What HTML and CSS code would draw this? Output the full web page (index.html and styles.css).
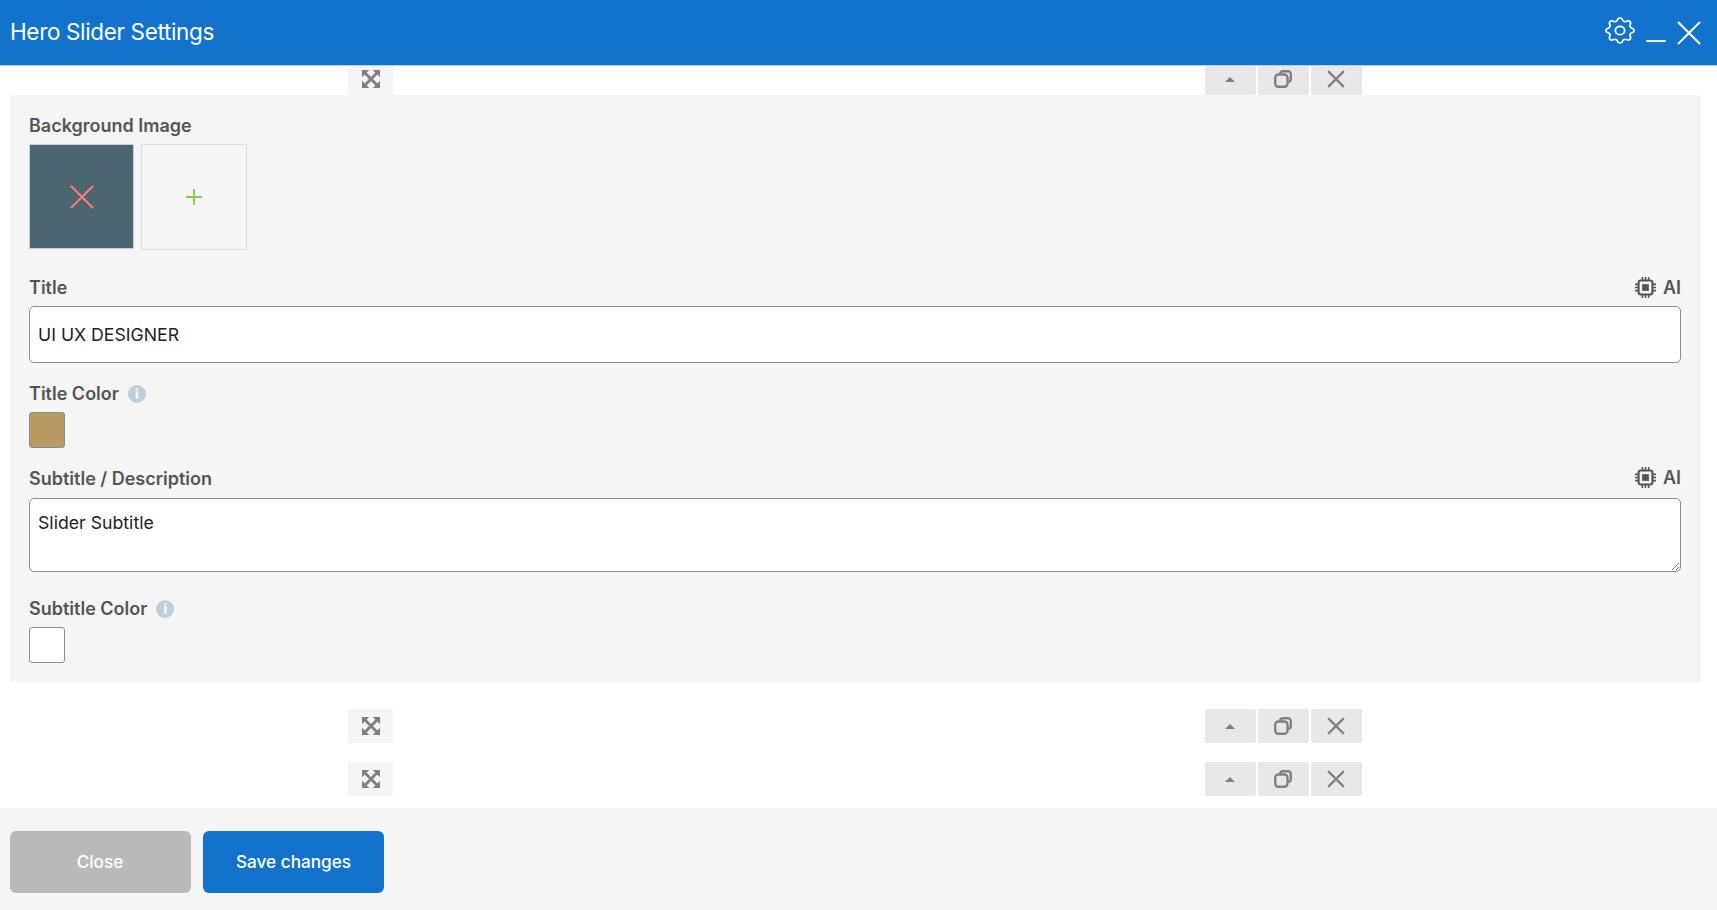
FILE: index.html
```html
<!DOCTYPE html>
<html lang="en">
<head>
<meta charset="utf-8">
<title>Hero Slider Settings</title>
<link rel="stylesheet" href="styles.css">
</head>
<body>
<header class="modal-header">
  <h1 class="modal-title">Hero Slider Settings</h1>
  <div class="header-tools">
    <svg class="ico-gear" viewBox="3 3 18 18" preserveAspectRatio="none" fill="none" stroke="currentColor" stroke-width="1.15"><path d="M10.325 4.317c.426-1.756 2.924-1.756 3.35 0a1.724 1.724 0 0 0 2.573 1.066c1.543-.94 3.31.826 2.37 2.37a1.724 1.724 0 0 0 1.065 2.572c1.756.426 1.756 2.924 0 3.35a1.724 1.724 0 0 0-1.066 2.573c.94 1.543-.826 3.31-2.37 2.37a1.724 1.724 0 0 0-2.572 1.065c-.426 1.756-2.924 1.756-3.35 0a1.724 1.724 0 0 0-2.573-1.066c-1.543.94-3.31-.826-2.37-2.37a1.724 1.724 0 0 0-1.065-2.572c-1.756-.426-1.756-2.924 0-3.35a1.724 1.724 0 0 0 1.066-2.573c-.94-1.543.826-3.31 2.37-2.37c1 .608 2.296.07 2.572-1.065z"/><circle cx="12" cy="12" r="3"/></svg>
    <span class="ico-min"></span>
    <svg class="ico-close" viewBox="0 0 24 24" fill="none" stroke="currentColor" stroke-width="2"><path d="M1 1l22 22M23 1L1 23"/></svg>
  </div>
</header>
<main class="modal-body">
  <div class="toolbar toolbar-first">
    <button class="tool tool-light"><svg class="ico" viewBox="0 0 16 16"><use href="#i-expand"/></svg></button>
    <div class="tool-group">
      <button class="tool"><span class="caret"></span></button>
      <button class="tool"><svg class="ico" viewBox="0 0 16 16"><use href="#i-copy"/></svg></button>
      <button class="tool"><svg class="ico" viewBox="0 0 16 16"><use href="#i-x"/></svg></button>
    </div>
  </div>
  <section class="panel">
    <label class="label">Background Image</label>
    <div class="thumbs">
      <div class="thumb thumb-image"><svg viewBox="0 0 24 24"><path d="M1 1l22 22M23 1L1 23"/></svg></div>
      <div class="thumb thumb-add"><svg viewBox="0 0 16 16"><path d="M8 0v16M0 8h16"/></svg></div>
    </div>
    <div class="label-row label-row-title">
      <label class="label">Title</label>
      <span class="ai"><svg viewBox="0 0 20 20"><use href="#i-chip"/></svg>AI</span>
    </div>
    <input class="field" type="text" value="UI UX DESIGNER">
    <div class="label-row label-row-color">
      <label class="label">Title Color</label>
      <span class="info">i</span>
    </div>
    <div class="swatch swatch-gold"></div>
    <div class="label-row label-row-sub">
      <label class="label">Subtitle / Description</label>
      <span class="ai"><svg viewBox="0 0 20 20"><use href="#i-chip"/></svg>AI</span>
    </div>
    <textarea class="field area">Slider Subtitle</textarea>
    <div class="label-row label-row-subcolor">
      <label class="label">Subtitle Color</label>
      <span class="info">i</span>
    </div>
    <div class="swatch swatch-white"></div>
  </section>
  <div class="toolbar toolbar-second">
    <button class="tool tool-light"><svg class="ico" viewBox="0 0 16 16"><use href="#i-expand"/></svg></button>
    <div class="tool-group">
      <button class="tool"><span class="caret"></span></button>
      <button class="tool"><svg class="ico" viewBox="0 0 16 16"><use href="#i-copy"/></svg></button>
      <button class="tool"><svg class="ico" viewBox="0 0 16 16"><use href="#i-x"/></svg></button>
    </div>
  </div>
  <div class="toolbar toolbar-third">
    <button class="tool tool-light"><svg class="ico" viewBox="0 0 16 16"><use href="#i-expand"/></svg></button>
    <div class="tool-group">
      <button class="tool"><span class="caret"></span></button>
      <button class="tool"><svg class="ico" viewBox="0 0 16 16"><use href="#i-copy"/></svg></button>
      <button class="tool"><svg class="ico" viewBox="0 0 16 16"><use href="#i-x"/></svg></button>
    </div>
  </div>
</main>
<footer class="modal-footer">
  <button class="btn btn-close">Close</button>
  <button class="btn btn-save">Save changes</button>
</footer>
<svg class="defs" aria-hidden="true">
  <symbol id="i-expand" viewBox="0 0 16 16">
    <path fill="currentColor" d="M0 0h6.500L0 6.500zM16 0v6.500L9.500 0zM0 16V9.500L6.500 16zM16 16H9.500L16 9.500z"/>
    <path fill="none" stroke="currentColor" stroke-width="2.600" d="M2.500 2.500l11 11M13.500 2.500l-11 11"/>
  </symbol>
  <symbol id="i-copy" viewBox="0 0 16 16">
    <path fill="none" stroke="currentColor" stroke-width="2.100" d="M5.500 3.300A2.300 2.300 0 0 1 7.800 1.100h4.800A2.300 2.300 0 0 1 14.900 3.400v4.800a2.300 2.300 0 0 1-2.300 2.300"/>
    <rect x="1.100" y="4" width="10.900" height="10.900" rx="2.800" fill="none" stroke="currentColor" stroke-width="2.100"/>
  </symbol>
  <symbol id="i-x" viewBox="0 0 16 16">
    <path fill="none" stroke="currentColor" stroke-width="2" d="M1 1l14 14M15 1L1 15"/>
  </symbol>
  <symbol id="i-chip" viewBox="0 0 20 20">
    <rect x="3.400" y="3.400" width="13.200" height="13.200" rx="2" fill="none" stroke="currentColor" stroke-width="2"/>
    <rect x="6.800" y="6.800" width="6.400" height="6.400" fill="currentColor"/>
    <path fill="none" stroke="currentColor" stroke-width="1.500" d="M7 0v3.500M10 0v3.500M13 0v3.500M7 16.500V20M10 16.500V20M13 16.500V20M0 7h3.500M0 10h3.500M0 13h3.500M16.500 7H20M16.500 10H20M16.500 13H20"/>
  </symbol>
</svg>
</body>
</html>
```
FILE: styles.css
```css
* { box-sizing: border-box; }
html, body { margin: 0; height: 100%; overflow: hidden; }
body {
  display: flex;
  flex-direction: column;
  background: #fff;
  font-family: Inter, "Liberation Sans", sans-serif;
  color: #555;
}
.defs { display: none; }
.modal-header {
  height: 66px;
  flex: none;
  display: flex;
  align-items: center;
  justify-content: space-between;
  padding: 0 16px 2px 10px;
  background: #1272cc;
  border-bottom: 1px solid #a8d2ee;
  color: #fff;
}
.modal-title { margin: 0; font-size: 22.5px; font-weight: 400; letter-spacing: -0.35px; }
.header-tools { display: flex; align-items: center; }
.ico-gear { width: 28px; height: 25px; margin: -3px 12px 0 0; overflow: visible; }
.ico-min { width: 20px; height: 2px; margin: 18px 11px 0 0; background: #e6f0fa; }
.ico-close { width: 24px; height: 24px; margin-top: 3px; }
.modal-body { flex: 1; }
.toolbar { display: flex; padding-left: 348px; }
.toolbar-first { height: 29px; }
.toolbar-first .tool { padding-bottom: 3px; }
.toolbar-second { height: 34px; margin-top: 27px; }
.toolbar-third { height: 34px; margin-top: 19px; }
.tool {
  width: 51px;
  padding: 0 1px 0 0;
  border: 0;
  border-radius: 2px;
  background: #e8e8e8;
  color: #808080;
  display: flex;
  align-items: center;
  justify-content: center;
}
.tool-light { width: 45px; padding-right: 0; background: #f5f5f5; margin-right: 812px; }
.tool-group { display: flex; gap: 2px; }
.ico { width: 18px; height: 18px; }
.caret {
  width: 0;
  height: 0;
  border-left: 5px solid transparent;
  border-right: 5px solid transparent;
  border-bottom: 5px solid #808080;
}
.panel {
  margin: 0 16px 0 10px;
  height: 587px;
  padding: 19px 20px 0 19px;
  background: #f5f5f5;
}
.label { font-size: 18px; font-weight: 600; line-height: 24px; color: #555; display: block; }
.thumbs { display: flex; gap: 7px; margin-top: 6px; }
.thumb {
  width: 105px;
  height: 105px;
  display: flex;
  align-items: center;
  justify-content: center;
}
.thumb-image { background: #4b6670; border: 1px solid #c9d0d3; }
.thumb-image svg { width: 24px; height: 24px; fill: none; stroke: #ff7b7b; stroke-width: 2; }
.thumb-add { width: 106px; height: 106px; border: 1px solid #ddd; }
.thumb-add svg { width: 16px; height: 16px; fill: none; stroke: #80d050; stroke-width: 1.8; }
.label-row { display: flex; align-items: center; justify-content: space-between; }
.label-row-title { margin-top: 26px; margin-bottom: 6px; }
.label-row-title .ai { margin-top: -2px; }
.label-row-sub { margin-top: 19px; margin-bottom: 7px; }
.label-row-sub .ai { margin-top: -4px; }
.label-row-color, .label-row-subcolor { justify-content: flex-start; gap: 9px; margin-bottom: 6px; }
.label-row-color { margin-top: 19px; }
.label-row-subcolor { margin-top: 25px; margin-bottom: 6px; }
.ai { display: flex; align-items: center; gap: 7px; font-size: 18px; font-weight: 600; color: #555; }
.ai svg { width: 21px; height: 21px; }
.info {
  width: 18px;
  height: 18px;
  border-radius: 50%;
  background: #bfced8;
  color: #f5f5f5;
  font-size: 13px;
  font-weight: 800;
  line-height: 18px;
  text-align: center;
}
.field {
  display: block;
  width: 100%;
  height: 57px;
  padding: 0 8px;
  border: 1px solid #8d8d8d;
  border-radius: 5px;
  background: #fff;
  font: 400 17.7px Inter, "Liberation Sans", sans-serif;
  color: #222;
  outline: 0;
}
.area { height: 74px; padding: 13px 8px; line-height: 22px; resize: vertical; }
.swatch { width: 36px; height: 36px; border: 1px solid #8d8d8d; border-radius: 3px; }
.swatch-gold { background: #b99a63; }
.swatch-white { background: #fff; }
.modal-footer {
  height: 102px;
  flex: none;
  display: flex;
  gap: 12.5px;
  padding: 23px 9.5px 0;
  background: #f5f5f5;
}
.btn {
  width: 181px;
  height: 62px;
  padding: 0 0 2px;
  border: 0;
  border-radius: 6px;
  color: #fff;
  font: 500 17.2px Inter, "Liberation Sans", sans-serif;
}
.btn-close { background: #b9b9b9; }
.btn-save { background: #1272cc; }
```
